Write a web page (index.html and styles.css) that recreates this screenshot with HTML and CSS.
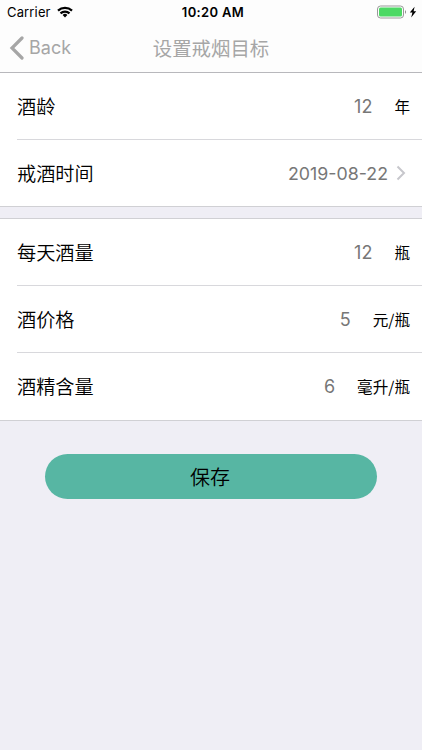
FILE: index.html
```
<!DOCTYPE html>
<html lang="zh-CN">
<head>
  <meta charset="UTF-8">
  <meta name="viewport" content="width=device-width, initial-scale=1.0">
  <title>设置戒烟目标</title>
  <link rel="stylesheet" href="styles.css">
</head>
<body>
  <header class="header">
    <div class="status-bar">
      <div class="carrier">
        <span class="carrier-name">Carrier</span>
        <svg class="wifi" width="16" height="12" viewBox="0 0 16 12" fill="none" stroke="#000" stroke-width="2.2">
          <path d="M1 4.6a10.2 10.2 0 0 1 14 0M3.5 7.4a6.5 6.5 0 0 1 9 0" />
          <path d="M8 11.5L5.6 9a3.5 3.5 0 0 1 4.8 0z" fill="#000" stroke="none" />
        </svg>
      </div>
      <span class="time">10:20 AM</span>
      <svg class="battery" width="40" height="14" viewBox="0 0 40 14">
        <rect x="0.5" y="1" width="26" height="12" rx="3" fill="none" stroke="#999" />
        <rect x="2" y="2.5" width="23" height="9" rx="1.5" fill="#4cd964" />
        <path d="M28 5q2 2 0 4z" fill="#888" />
        <path d="M37.6 1.8L32.8 7.6h2.6l-1.2 4.8 5-6.2h-2.6z" />
      </svg>
    </div>
    <nav class="nav-bar">
      <a class="back">
        <svg width="15" height="24" viewBox="0 0 15 24" fill="none" stroke="#a6a6a6" stroke-width="3.2" stroke-linecap="round">
          <path d="M13 2L3 12l10 10" />
        </svg>
        <span class="back-text">Back</span>
      </a>
      <h1 class="title">设置戒烟目标</h1>
    </nav>
  </header>

  <main>
    <section class="group">
      <div class="row">
        <span class="label">酒龄</span>
        <span class="value">12</span>
        <span class="unit">年</span>
      </div>
      <div class="row">
        <span class="label">戒酒时间</span>
        <span class="value date">2019-08-22</span>
        <svg class="arrow" width="10" height="16" viewBox="0 0 10 16" fill="none" stroke="#c7c7cc" stroke-width="2">
          <path d="M1.5 1.5L8 8l-6.5 6.5" />
        </svg>
      </div>
    </section>

    <section class="group">
      <div class="row">
        <span class="label">每天酒量</span>
        <span class="value">12</span>
        <span class="unit">瓶</span>
      </div>
      <div class="row">
        <span class="label">酒价格</span>
        <span class="value">5</span>
        <span class="unit">元/瓶</span>
      </div>
      <div class="row">
        <span class="label">酒精含量</span>
        <span class="value">6</span>
        <span class="unit">毫升/瓶</span>
      </div>
    </section>

    <button class="save" type="button">保存</button>
  </main>
</body>
</html>
```

FILE: styles.css
```
* {
  box-sizing: border-box;
}
body {
  margin: 0;
  min-height: 750px;
  background: #efeef5;
  color: #000;
  font-family: Inter, "Noto Sans CJK SC", sans-serif;
}
.header {
  height: 73px;
  background: #fdfdfd;
  border-bottom: 1px solid #b8b8bc;
}
.status-bar {
  display: grid;
  grid-template-columns: 1fr auto 1fr;
  align-items: center;
  height: 23px;
  padding: 0 5px 0 7px;
  font-size: 13px;
}
.carrier {
  display: flex;
  align-items: center;
  gap: 6px;
}
.carrier-name {
  letter-spacing: 0.15px;
}
.time {
  padding-left: 2px;
  font-weight: 600;
  letter-spacing: 0.35px;
}
.battery {
  justify-self: end;
}
.nav-bar {
  display: grid;
  grid-template-columns: 1fr auto 1fr;
  align-items: center;
  height: 49px;
  padding: 0 9px;
  color: #a6a6a6;
}
.back {
  display: flex;
  align-items: center;
  gap: 5px;
  font-size: 18px;
}
.title {
  margin: 0;
  font-size: 19.4px;
  font-weight: 400;
}
.group {
  margin-bottom: 11px;
  background: #fff;
  border-bottom: 1px solid #d0d0d4;
}
.group + .group {
  padding-bottom: 1px;
  border-top: 1px solid #d0d0d4;
}
.row {
  display: flex;
  align-items: center;
  height: 66px;
  margin-left: 17px;
  padding-right: 12px;
}
.row + .row {
  height: 67px;
  border-top: 1px solid #d8d8dc;
}
.row:nth-child(3) {
  padding-top: 1px;
}
.label {
  flex: 1;
  padding-bottom: 1px;
  font-size: 19.2px;
  font-weight: 350;
}
.value {
  color: #777;
  font-size: 18px;
}
.date {
  font-size: 17.8px;
}
.unit {
  margin-left: 22px;
  padding-bottom: 1px;
  font-family: "Noto Sans CJK SC", sans-serif;
  font-size: 15.6px;
}
.arrow {
  margin-left: 8px;
  margin-right: 4px;
}
.save {
  display: block;
  width: 332px;
  height: 45px;
  margin: 33px auto 0;
  padding: 0 2px 1px 0;
  border: none;
  border-radius: 23px;
  background: #57b6a3;
  color: #000;
  font-family: inherit;
  font-size: 20px;
  font-weight: 350;
}
```
